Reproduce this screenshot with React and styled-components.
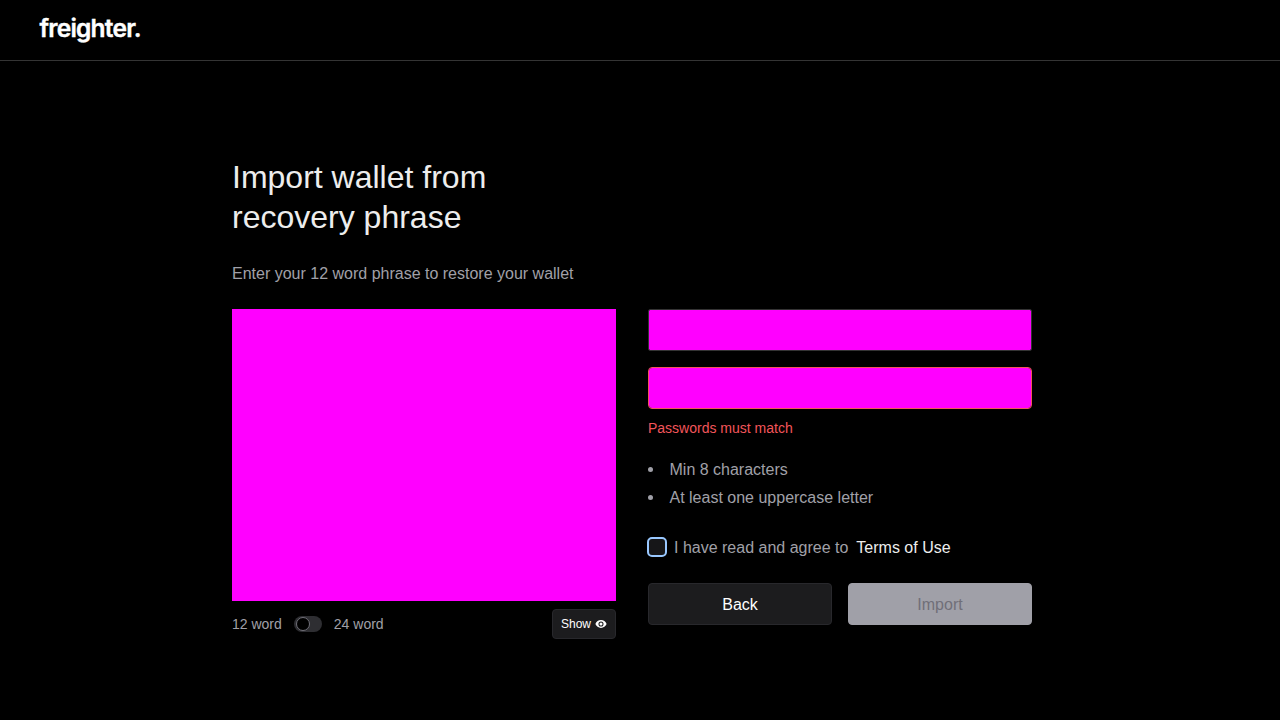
import React from "react";
import styled, { createGlobalStyle } from "styled-components";

const GlobalStyle = createGlobalStyle`
  * { box-sizing: border-box; }
  body {
    margin: 0;
    background: #000;
    color: #a0a0a8;
    font: 16px/24px "Liberation Sans", Arial, sans-serif;
    -webkit-font-smoothing: antialiased;
  }
`;

const Page = styled.div`
  height: 720px;
  overflow: hidden;
  background: #000;
`;

const Header = styled.header`
  height: 61px;
  padding: 0 40px;
  border-bottom: 1px solid #343434;
`;

const Logo = styled.svg`
  display: block;
  width: 104px;
  height: 60px;
  overflow: visible;

  text {
    font: 600 24.500px Inter, sans-serif;
    fill: #fff;
    stroke: #fff;
    stroke-width: 0.4px;
  }
`;

const Main = styled.main`
  width: 800px;
  margin: 96px 0 0 232px;
`;

const Title = styled.h1`
  margin: 0 0 24px;
  font-size: 32px;
  line-height: 40px;
  font-weight: 400;
  color: #ededed;
  width: 300px;
`;

const Intro = styled.p`
  margin: 0 0 23px;
  padding-top: 1px;
`;

const Columns = styled.div`
  display: grid;
  grid-template-columns: 384px 384px;
  gap: 32px;
`;

const PhrasePanel = styled.div`
  height: 292px;
  background: #f0f;
`;

const PhraseFooter = styled.div`
  display: flex;
  justify-content: space-between;
  align-items: center;
  margin-top: 8px;
`;

const WordCount = styled.div`
  display: flex;
  align-items: center;
  gap: 12px;
  font-size: 14px;
`;

const Toggle = styled.span`
  width: 28px;
  height: 16px;
  padding: 1px 1px 1px 2px;
  border-radius: 8px;
  background: #2e2e32;
`;

const ToggleKnob = styled.span`
  display: block;
  width: 14px;
  height: 14px;
  border: 1px solid #706f78;
  border-radius: 50%;
  background: #000;
`;

const Button = styled.button`
  display: flex;
  align-items: center;
  justify-content: center;
  gap: 4px;
  width: ${(p) => (p.$small ? "64px" : "184px")};
  height: ${(p) => (p.$small ? "30px" : "42px")};
  padding: ${(p) => (p.$small ? "0" : "1px 0 0")};
  font-family: inherit;
  font-size: ${(p) => (p.$small ? "12px" : "16px")};
  line-height: ${(p) => (p.$small ? "18px" : "24px")};
  color: ${(p) => (p.$muted ? "#706f78" : "#fff")};
  background: ${(p) => (p.$muted ? "#a0a0a8" : "#1c1c1e")};
  border: 1px solid ${(p) => (p.$muted ? "#a0a0a8" : "#28282c")};
  border-radius: 4px;
`;

const Field = styled.div`
  height: 42px;
  margin-bottom: ${(p) => (p.$error ? "8px" : "16px")};
  border: 1px solid ${(p) => (p.$error ? "#f2555a" : "#343434")};
  border-radius: ${(p) => (p.$error ? "4px" : "2px")};
  background: #f0f;
  background-clip: padding-box;
`;

const ErrorText = styled.div`
  font-size: 14px;
  line-height: 22px;
  color: #f2555a;
`;

const Rules = styled.ul`
  margin: 18px 0 0;
  padding: 0;
  list-style: none;
`;

const Rule = styled.li`
  display: flex;
  align-items: center;
  height: 24px;
  margin-bottom: 4px;

  &::before {
    content: "";
    width: 5px;
    height: 5px;
    margin-right: 16.5px;
    border-radius: 50%;
    background: #a0a0a8;
  }
`;

const RuleText = styled.span`
  padding-top: 2px;
`;

const Terms = styled.div`
  display: flex;
  align-items: center;
  height: 24px;
  margin: 26px 0 24px -1px;
`;

const Checkbox = styled.span`
  width: 20px;
  height: 20px;
  margin-right: 7px;
  border: 2px solid #99c8ff;
  border-radius: 5px;
  background: #161618;
`;

const TermsText = styled.span`
  padding-top: 2px;
`;

const TermsLink = styled(TermsText)`
  margin-left: 8px;
  color: #ededed;
`;

const Actions = styled.div`
  display: flex;
  gap: 16px;
`;

const EyeIcon = () => (
  <svg width="12" height="12" viewBox="0 0 12 12" fill="none" aria-hidden="true">
    <path
      fill="#fff"
      fillRule="evenodd"
      d="M6 2.1C3.5 2.1 1.3 3.7.4 6c.9 2.3 3.1 3.9 5.6 3.9s4.7-1.6 5.6-3.9C10.7 3.7 8.5 2.1 6 2.1Zm0 6.45a2.55 2.55 0 1 1 0-5.1 2.55 2.55 0 0 1 0 5.1Z"
    />
    <circle cx="6" cy="6" r="1.5" fill="#fff" />
  </svg>
);

export default function App() {
  return (
    <Page>
      <GlobalStyle />
      <Header>
        <Logo aria-label="freighter.">
          <text x="-0.5" y="36.7" textLength="102" lengthAdjust="spacing">
            freighter.
          </text>
        </Logo>
      </Header>
      <Main>
        <Title>
          Import wallet from
          <br />
          recovery phrase
        </Title>
        <Intro>Enter your 12 word phrase to restore your wallet</Intro>
        <Columns>
          <section>
            <PhrasePanel />
            <PhraseFooter>
              <WordCount>
                <span>12 word</span>
                <Toggle>
                  <ToggleKnob />
                </Toggle>
                <span>24 word</span>
              </WordCount>
              <Button $small>
                Show
                <EyeIcon />
              </Button>
            </PhraseFooter>
          </section>
          <section>
            <Field />
            <Field $error />
            <ErrorText>Passwords must match</ErrorText>
            <Rules>
              <Rule>
                <RuleText>Min 8 characters</RuleText>
              </Rule>
              <Rule>
                <RuleText>At least one uppercase letter</RuleText>
              </Rule>
            </Rules>
            <Terms>
              <Checkbox />
              <TermsText>I have read and agree to</TermsText>
              <TermsLink>Terms of Use</TermsLink>
            </Terms>
            <Actions>
              <Button>Back</Button>
              <Button $muted>Import</Button>
            </Actions>
          </section>
        </Columns>
      </Main>
    </Page>
  );
}
